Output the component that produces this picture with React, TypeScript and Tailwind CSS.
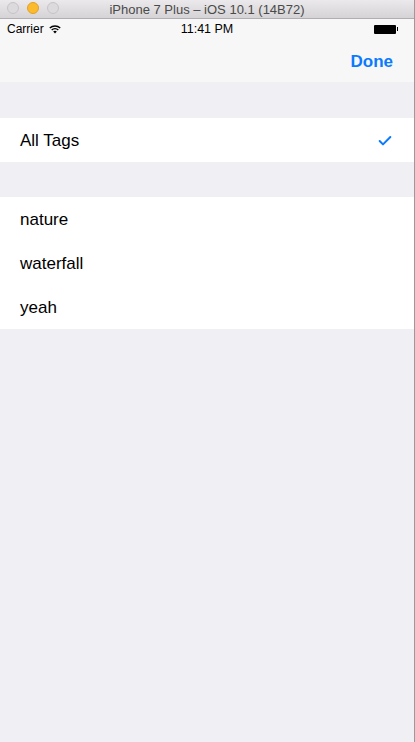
import { Check } from 'lucide-react';

const tags = ['nature', 'waterfall', 'yeah'];

const Wifi = () => (
  <svg width="12" height="9" viewBox="0 0 12 9" className="ml-[5px]">
    <path d="M6 8.5 L4.2 6.6 A2.6 2.6 0 0 1 7.8 6.6 Z" fill="#000" />
    <path d="M2.7 5.1 A4.8 4.8 0 0 1 9.3 5.1" stroke="#000" strokeWidth="1.4" fill="none" />
    <path d="M0.8 3.1 A7.4 7.4 0 0 1 11.2 3.1" stroke="#000" strokeWidth="1.4" fill="none" />
  </svg>
);

const App = () => {
  return (
    <div
      className="w-[415px] h-[742px] flex flex-col bg-[#efeff4] border-r border-[#9a9a9a] overflow-hidden"
      style={{ fontFamily: '"Liberation Sans", Arial, sans-serif' }}
    >
      {/* Simulator window title bar */}
      <div className="relative h-[19px] flex items-center justify-center bg-gradient-to-b from-[#ebe9eb] to-[#d5d3d5] border-b border-[#b0aeb0]">
        <div className="absolute left-[7px] top-[2px] flex gap-[8px]">
          <div className="w-[12px] h-[12px] rounded-full bg-[#dcdadc] border border-[#c6c4c6]" />
          <div className="w-[12px] h-[12px] rounded-full bg-[#fcbb2d] border border-[#e0a12a]" />
          <div className="w-[12px] h-[12px] rounded-full bg-[#dcdadc] border border-[#c6c4c6]" />
        </div>
        <span className="text-[13px] text-[#4a4a4a] leading-none">iPhone 7 Plus – iOS 10.1 (14B72)</span>
      </div>

      {/* Status bar + nav */}
      <div className="bg-[#f7f7f7]">
        <div className="relative h-[19px] flex items-center px-[7px] pt-[1px] text-[12px] text-black">
          <span>Carrier</span>
          <Wifi />
          <span className="absolute left-1/2 -translate-x-1/2 text-[12.5px]">11:41 PM</span>
          <div className="ml-auto mr-[9px] flex items-center">
            <div className="w-[22px] h-[9px] bg-black rounded-[1px]" />
            <div className="w-[1px] h-[4px] bg-black ml-[1px]" />
          </div>
        </div>
        <div className="h-[44px] flex items-center justify-end pr-[21px] pt-[3px]">
          <span className="text-[17px] font-semibold text-[#0a7aff]">Done</span>
        </div>
      </div>

      <div className="h-[36px]" />

      <div className="bg-white h-[44px] flex items-center pl-[20px] pr-[21px] pt-[1px]">
        <span className="text-[17px] text-black">All Tags</span>
        <Check className="ml-auto text-[#0a7aff]" size={16} strokeWidth={3} />
      </div>

      <div className="h-[35px]" />

      <div className="bg-white">
        {tags.map((t) => (
          <div key={t} className="h-[44px] flex items-center pl-[20px] pt-[1px]">
            <span className="text-[17px] text-black">{t}</span>
          </div>
        ))}
      </div>
    </div>
  );
};

export default App;
